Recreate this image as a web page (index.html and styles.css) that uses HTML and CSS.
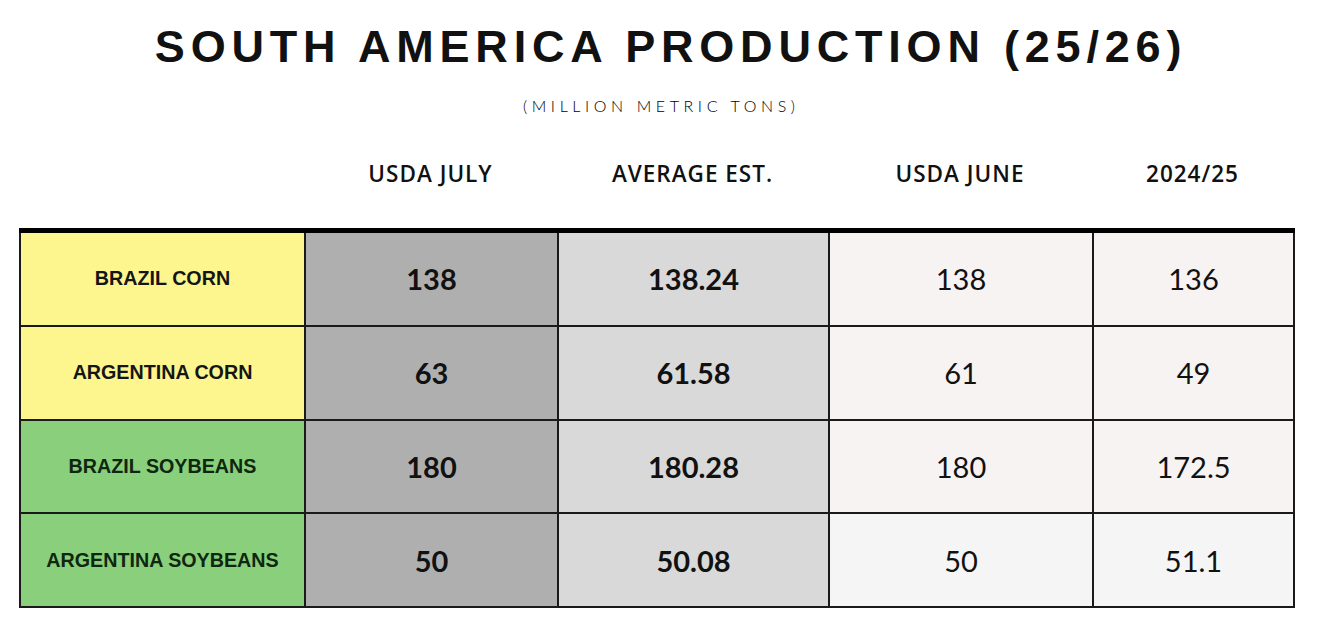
FILE: index.html
```html
<!DOCTYPE html>
<html lang="en">
<head>
<meta charset="utf-8">
<title>South America Production (25/26)</title>
<link rel="stylesheet" href="styles.css">
</head>
<body>
<div class="page">
  <header class="heading">
    <h1 class="title">SOUTH AMERICA PRODUCTION (25/26)</h1>
    <p class="subtitle">(MILLION METRIC TONS)</p>
  </header>
  <div class="colheads">
    <span></span>
    <span>USDA JULY</span>
    <span>AVERAGE EST.</span>
    <span>USDA JUNE</span>
    <span>2024/25</span>
  </div>
  <table class="grid">
    <colgroup>
      <col class="c1"><col class="c2"><col class="c3"><col class="c4"><col class="c5">
    </colgroup>
    <tbody>
      <tr class="corn">
        <th>BRAZIL CORN</th>
        <td class="july">138</td>
        <td class="avg">138.24</td>
        <td class="june">138</td>
        <td class="prev">136</td>
      </tr>
      <tr class="corn">
        <th>ARGENTINA CORN</th>
        <td class="july">63</td>
        <td class="avg">61.58</td>
        <td class="june">61</td>
        <td class="prev">49</td>
      </tr>
      <tr class="soy">
        <th>BRAZIL SOYBEANS</th>
        <td class="july">180</td>
        <td class="avg">180.28</td>
        <td class="june">180</td>
        <td class="prev">172.5</td>
      </tr>
      <tr class="soy last">
        <th>ARGENTINA SOYBEANS</th>
        <td class="july">50</td>
        <td class="avg">50.08</td>
        <td class="june">50</td>
        <td class="prev">51.1</td>
      </tr>
    </tbody>
  </table>
</div>
</body>
</html>
```
FILE: styles.css
```css
html, body {
  margin: 0;
  padding: 0;
  background: #ffffff;
}

.page {
  width: 1318px;
  height: 625px;
  padding-top: 24px;
  box-sizing: border-box;
  color: #111;
}

.heading {
  text-align: center;
}

.title {
  margin: 0;
  padding-left: 24px;
  font-family: "Liberation Sans", Arial, sans-serif;
  font-weight: 700;
  font-size: 45px;
  line-height: 46px;
  letter-spacing: 5.8px;
  color: #111;
}

.subtitle {
  margin: 26px 0 0;
  padding-left: 4.6px;
  font-family: "Lato", "Liberation Sans", sans-serif;
  font-weight: 300;
  font-size: 16px;
  line-height: 20px;
  letter-spacing: 4.6px;
  color: #000;
}

.colheads {
  display: grid;
  grid-template-columns: 285px 253px 271px 264px 201px;
  margin: 46px 0 0 19px;
  font-family: "Open Sans", "Liberation Sans", sans-serif;
  font-weight: 600;
  font-size: 22.5px;
  line-height: 24px;
  letter-spacing: 1px;
  color: #111;
  text-align: center;
}

.grid {
  margin: 42px 0 0 19px;
  width: 1274px;
  border-collapse: collapse;
  table-layout: fixed;
}

.c1 { width: 285px; }
.c2 { width: 253px; }
.c3 { width: 271px; }
.c4 { width: 264px; }
.c5 { width: 201px; }

.grid th,
.grid td {
  border: 2px solid #1a1a1a;
  height: 91.8px;
  padding: 0;
  text-align: center;
  vertical-align: middle;
}

.grid tr:first-child th,
.grid tr:first-child td {
  border-top: 5px solid #000;
}

.grid th {
  font-family: "Liberation Sans", Arial, sans-serif;
  font-weight: 700;
  font-size: 19.7px;
  color: #151515;
}

.corn th { background: #fdf68f; }
.soy th { background: #89cf7c; color: #0f260f; }

.grid td {
  font-family: "Lato", "Liberation Sans", sans-serif;
  font-size: 29px;
  color: #111;
}

.july {
  background: #afafaf;
  font-weight: 700;
}

.avg {
  background: #d9d9d9;
  font-weight: 700;
}

.june,
.prev {
  background: #f7f3f2;
  font-weight: 400;
}

.last .june,
.last .prev {
  background: #f5f5f5;
}
```
